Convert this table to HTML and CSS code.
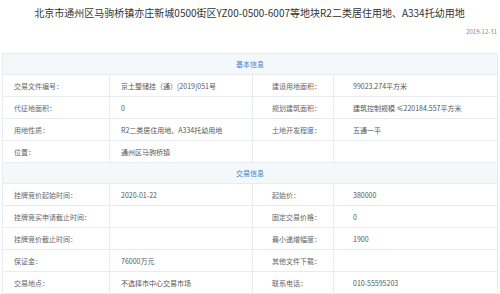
FILE: index.html
```html
<!DOCTYPE html>
<html lang="zh-CN">
<head>
<meta charset="utf-8">
<title>地块信息</title>
<link rel="stylesheet" href="styles.css">
</head>
<body>
<div class="page">
  <h1 class="title">北京市通州区马驹桥镇亦庄新城0500街区YZ00-0500-6007等地块R2二类居住用地、A334托幼用地</h1>
  <div class="date">2019-12-31</div>
  <table class="info">
    <colgroup>
      <col class="c1"><col class="c2"><col class="c3"><col class="c4">
    </colgroup>
    <tr class="sec"><td colspan="4">基本信息</td></tr>
    <tr><td class="l1">交易文件编号：</td><td class="v1">京土整储挂（通）[2019]051号</td><td class="l2">建设用地面积：</td><td class="v2">99023.274平方米</td></tr>
    <tr><td class="l1">代征地面积：</td><td class="v1">0</td><td class="l2">规划建筑面积：</td><td class="v2">建筑控制规模 ≤220184.557平方米</td></tr>
    <tr><td class="l1">用地性质：</td><td class="v1">R2二类居住用地、A334托幼用地</td><td class="l2">土地开发程度：</td><td class="v2">五通一平</td></tr>
    <tr><td class="l1">位置：</td><td class="v1">通州区马驹桥镇</td><td class="l2"></td><td class="v2"></td></tr>
    <tr class="sec"><td colspan="4">交易信息</td></tr>
    <tr><td class="l1">挂牌竞价起始时间：</td><td class="v1">2020-01-22</td><td class="l2">起始价：</td><td class="v2">380000</td></tr>
    <tr><td class="l1">挂牌竞买申请截止时间：</td><td class="v1"></td><td class="l2">固定交易价格：</td><td class="v2">0</td></tr>
    <tr><td class="l1">挂牌竞价截止时间：</td><td class="v1"></td><td class="l2">最小递增幅度：</td><td class="v2">1900</td></tr>
    <tr><td class="l1">保证金：</td><td class="v1">76000万元</td><td class="l2">其他文件下载：</td><td class="v2"></td></tr>
    <tr><td class="l1">交易地点：</td><td class="v1">不选择市中心交易市场</td><td class="l2">联系电话：</td><td class="v2">010-55595203</td></tr>
  </table>
</div>
</body>
</html>
```

FILE: styles.css
```css
* { box-sizing: border-box; }
html, body { margin: 0; padding: 0; background: #fff; }
body {
  font-family: "Noto Sans CJK SC", "Noto Sans", sans-serif;
  color: #555;
}
.page { padding: 0 3px 0 2px; }
.title {
  margin: 0;
  padding-top: 5px;
  height: 24px;
  font-size: 10px;
  line-height: 16px;
  font-weight: normal;
  color: #333;
  text-align: center;
  white-space: nowrap;
}
.date {
  text-align: right;
  font-size: 6px;
  line-height: 14px;
  color: #888;
  height: 29px;
  padding-top: 1px;
}
.info {
  width: 495px;
  border-collapse: collapse;
  table-layout: fixed;
  font-size: 7px;
}
.c1 { width: 107px; }
.c2 { width: 143px; }
.c3 { width: 81px; }
.c4 { width: 164px; }
.info td {
  border: 1px solid #e9ecef;
  height: 22px;
  padding: 0;
  line-height: 12px;
  white-space: nowrap;
  overflow: hidden;
  color: #555;
}
.info .l1, .info .v1 { padding-left: 11px; }
.info .l2, .info .v2 { padding-left: 19px; }
.info .l1, .info .l2 { color: #666; }
.info .sec td {
  background: #f5f8fb;
  color: #3a84d0;
  text-align: center;
  height: 21px;
}
```
